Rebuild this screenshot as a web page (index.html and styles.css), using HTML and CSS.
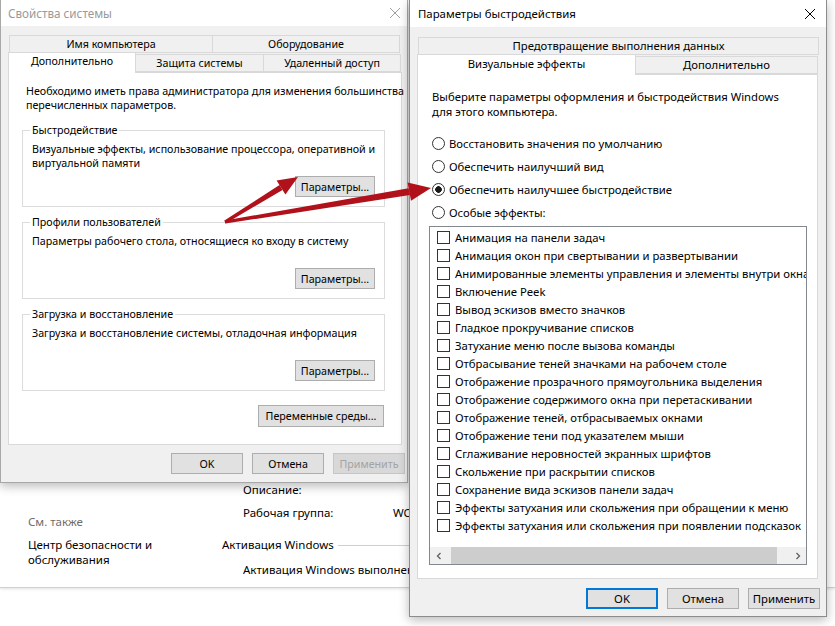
FILE: index.html
```html
<!DOCTYPE html>
<html lang="ru">
<head>
    <meta charset="UTF-8">
    <title>Параметры быстродействия</title>
    <link rel="stylesheet" href="styles.css">
</head>
<body>
<div class="desk">

    <!-- окно "Система" на заднем плане -->
    <div class="sysinfo">
        <div class="see-also">
            <div class="muted">См. также</div>
            <div class="link">Центр безопасности и<br>обслуживания</div>
        </div>
        <div class="info">
            <div class="row">Описание:</div>
            <div class="row row-wg"><span class="key">Рабочая группа:</span><span>WORKGROUP</span></div>
            <div class="section"><span>Активация Windows</span><span class="rule"></span></div>
            <div class="row row-act">Активация Windows выполнена</div>
        </div>
    </div>

    <!-- Свойства системы -->
    <div class="win win-sys">
        <div class="titlebar inactive">
            <span>Свойства системы</span>
            <svg class="close" width="12" height="12" viewBox="0 0 12 12"><path d="M1 1L11 11M11 1L1 11"/></svg>
        </div>
        <div class="win-body">
            <div class="tabrow tabrow-top">
                <span class="tab t-name">Имя компьютера</span>
                <span class="tab t-hw">Оборудование</span>
            </div>
            <div class="tabrow">
                <span class="tab selected t-adv">Дополнительно</span>
                <span class="tab t-prot">Защита системы</span>
                <span class="tab t-remote">Удаленный доступ</span>
            </div>
            <div class="panel panel-sys">
                <p class="intro">Необходимо иметь права администратора для изменения большинства<br>перечисленных параметров.</p>

                <fieldset>
                    <legend>Быстродействие</legend>
                    <p class="desc">Визуальные эффекты, использование процессора, оперативной и виртуальной памяти</p>
                    <div class="btn-line"><button class="btn btn-param">Параметры...</button></div>
                </fieldset>

                <fieldset>
                    <legend>Профили пользователей</legend>
                    <p class="desc">Параметры рабочего стола, относящиеся ко входу в систему</p>
                    <div class="btn-line"><button class="btn btn-param">Параметры...</button></div>
                </fieldset>

                <fieldset>
                    <legend>Загрузка и восстановление</legend>
                    <p class="desc">Загрузка и восстановление системы, отладочная информация</p>
                    <div class="btn-line"><button class="btn btn-param">Параметры...</button></div>
                </fieldset>

                <div class="btn-line env"><button class="btn btn-env">Переменные среды...</button></div>
            </div>
            <div class="buttons">
                <button class="btn">OK</button>
                <button class="btn">Отмена</button>
                <button class="btn disabled">Применить</button>
            </div>
        </div>
    </div>

    <!-- Параметры быстродействия -->
    <div class="win win-perf">
        <div class="titlebar">
            <span>Параметры быстродействия</span>
            <svg class="close" width="12" height="12" viewBox="0 0 12 12"><path d="M1 1L11 11M11 1L1 11"/></svg>
        </div>
        <div class="win-body">
            <div class="tabrow tabrow-top">
                <span class="tab t-dep">Предотвращение выполнения данных</span>
            </div>
            <div class="tabrow">
                <span class="tab selected t-vis">Визуальные эффекты</span>
                <span class="tab t-more">Дополнительно</span>
            </div>
            <div class="panel panel-perf">
                <p class="intro">Выберите параметры оформления и быстродействия Windows<br>для этого компьютера.</p>
                <div class="radios">
                    <div class="radio"><span class="dot"></span>Восстановить значения по умолчанию</div>
                    <div class="radio"><span class="dot"></span>Обеспечить наилучший вид</div>
                    <div class="radio"><span class="dot on"></span>Обеспечить наилучшее быстродействие</div>
                    <div class="radio"><span class="dot"></span>Особые эффекты:</div>
                </div>
                <div class="effects">
                    <div class="items">
                        <div class="check"><span class="box"></span>Анимация на панели задач</div>
                        <div class="check"><span class="box"></span>Анимация окон при свертывании и развертывании</div>
                        <div class="check"><span class="box"></span>Анимированные элементы управления и элементы внутри окна</div>
                        <div class="check"><span class="box"></span>Включение Peek</div>
                        <div class="check"><span class="box"></span>Вывод эскизов вместо значков</div>
                        <div class="check"><span class="box"></span>Гладкое прокручивание списков</div>
                        <div class="check"><span class="box"></span>Затухание меню после вызова команды</div>
                        <div class="check"><span class="box"></span>Отбрасывание теней значками на рабочем столе</div>
                        <div class="check"><span class="box"></span>Отображение прозрачного прямоугольника выделения</div>
                        <div class="check"><span class="box"></span>Отображение содержимого окна при перетаскивании</div>
                        <div class="check"><span class="box"></span>Отображение теней, отбрасываемых окнами</div>
                        <div class="check"><span class="box"></span>Отображение тени под указателем мыши</div>
                        <div class="check"><span class="box"></span>Сглаживание неровностей экранных шрифтов</div>
                        <div class="check"><span class="box"></span>Скольжение при раскрытии списков</div>
                        <div class="check"><span class="box"></span>Сохранение вида эскизов панели задач</div>
                        <div class="check"><span class="box"></span>Эффекты затухания или скольжения при обращении к меню</div>
                        <div class="check"><span class="box"></span>Эффекты затухания или скольжения при появлении подсказок</div>
                    </div>
                    <div class="hscroll">
                        <span class="arrow"><svg width="8" height="8" viewBox="0 0 8 8"><path d="M5.5 1L2.5 4L5.5 7"/></svg></span>
                        <span class="thumb"></span>
                        <span class="arrow"><svg width="8" height="8" viewBox="0 0 8 8"><path d="M2.5 1L5.5 4L2.5 7"/></svg></span>
                    </div>
                </div>
            </div>
            <div class="buttons">
                <button class="btn default">OK</button>
                <button class="btn">Отмена</button>
                <button class="btn">Применить</button>
            </div>
        </div>
    </div>

    <!-- красные стрелки поверх скриншота -->
    <svg class="arrows" width="835" height="626" viewBox="0 0 835 626">
        <polygon points="224.4,220.6 279.5,185 282.5,190 225.6,223.4"/>
        <polygon points="298,177 276.6,180.4 285.4,194.6"/>
        <polygon points="224.6,220.6 408.6,188.2 410,195 225.4,223.6"/>
        <polygon points="431,188 407.6,182.4 411,200.8"/>
    </svg>
</div>
</body>
</html>
```

FILE: styles.css
```css
* {
    box-sizing: border-box;
}
body {
    margin: 0;
    background: #fff;
    font-family: "Noto Sans", "Segoe UI", sans-serif;
    color: #000;
}
p {
    margin: 0;
}
.desk {
    position: relative;
    width: 835px;
    height: 626px;
    overflow: hidden;
}

/* окно на заднем плане */
.sysinfo {
    position: absolute;
    left: 0;
    top: 0;
    width: 835px;
    height: 588px;
    border-bottom: 1px solid #d0d0d0;
    box-shadow: 0 1px 3px rgba(0, 0, 0, 0.12);
    padding-top: 482px;
    display: grid;
    grid-template-columns: 222px 1fr;
    font-size: 11.5px;
    line-height: 16px;
    white-space: nowrap;
}
.see-also {
    padding: 32px 0 0 28px;
}
.muted {
    color: #6d6d6d;
}
.link {
    margin-top: 7px;
    line-height: 15px;
}
.row {
    padding-left: 21px;
}
.row-wg {
    margin-top: 7px;
}
.key {
    display: inline-block;
    width: 150px;
}
.section {
    margin-top: 16px;
    display: flex;
    align-items: center;
}
.rule {
    width: 200px;
    height: 1px;
    margin-left: 4px;
    background: #cfcfcf;
}
.row-act {
    margin-top: 9px;
}

/* окна */
.win {
    position: absolute;
    top: 0;
    background: #f0f0f0;
    border: 1px solid #a8a8a8;
    border-top: none;
    box-shadow: 0 3px 10px rgba(0, 0, 0, 0.28);
}
.win-sys {
    left: 0;
    width: 408px;
    height: 483px;
}
.win-perf {
    left: 409px;
    width: 418px;
    height: 617px;
    border-color: #8c8c8c;
}
.titlebar {
    height: 26px;
    background: #fff;
    display: flex;
    align-items: center;
    justify-content: space-between;
    padding: 0 6px 0 7px;
    font-size: 11.7px;
}
.win-perf .titlebar {
    height: 27px;
    padding: 0 10px 0 8px;
    font-size: 11.4px;
}
.close {
    stroke: #000;
    stroke-width: 1;
    fill: none;
}
.inactive {
    color: #999;
}
.inactive .close {
    stroke: #a0a0a0;
}
.win-body {
    padding: 9px 0 0 7px;
    font-size: 10.7px;
}
.win-perf .win-body {
    padding: 10px 0 0 7px;
    font-size: 11.3px;
}

/* вкладки */
.tabrow {
    display: flex;
    align-items: flex-end;
    height: 19px;
}
.tabrow-top {
    height: 18px;
    padding-left: 1px;
}
.tab {
    height: 18px;
    line-height: 16px;
    text-align: center;
    background: #f0f0f0;
    border: 1px solid #d9d9d9;
    margin-left: -1px;
    white-space: nowrap;
}
.tab:first-child {
    margin-left: 0;
}
.tab.selected {
    position: relative;
    z-index: 1;
    height: 21px;
    margin-bottom: -1px;
    background: #fff;
    border-bottom: none;
    line-height: 17px;
}
.t-name { width: 204px; }
.t-hw { width: 188px; }
.t-adv { width: 128px; }
.t-prot { width: 129px; }
.t-remote { width: 138px; }
.t-dep { width: 401px; }
.t-vis { width: 219px; }
.t-more { width: 183px; }

.panel {
    background: #fff;
    border: 1px solid #d9d9d9;
}
.panel-sys {
    width: 394px;
    height: 373px;
    padding: 11px 0 0 13px;
}
.panel-sys .intro {
    padding-left: 4px;
    line-height: 14px;
    white-space: nowrap;
}
fieldset {
    width: 363px;
    margin: 11px 0 0 0;
    padding: 0 9px 9px 9px;
    border: 1px solid #dcdcdc;
    min-width: 0;
}
fieldset + fieldset {
    margin-top: 8px;
}
legend {
    padding: 0 2px;
    margin-left: -2px;
    line-height: 14px;
}
.desc {
    margin: 5px -6px 0 0;
    height: 28px;
    line-height: 14px;
}
.btn-line {
    display: flex;
    justify-content: flex-end;
    margin-top: 6px;
}
.env {
    width: 362px;
    margin-top: 14px;
}

/* кнопки */
.btn {
    width: 72px;
    height: 21px;
    padding: 0;
    font-family: inherit;
    font-size: inherit;
    color: #000;
    background: #e1e1e1;
    border: 1px solid #adadad;
}
.btn-param {
    width: 80px;
}
.btn-env {
    width: 126px;
    height: 22px;
}
.btn.default {
    border-color: #0078d7;
    box-shadow: inset 0 0 0 1px #0078d7;
}
.btn.disabled {
    color: #a3a3a3;
    background: #d8d8d8;
    border-color: #c6c6c6;
}
.buttons {
    display: flex;
    justify-content: flex-end;
    gap: 9px;
    padding-right: 2px;
    margin-top: 8px;
}
.win-perf .buttons {
    padding-right: 6px;
    margin-top: 9px;
}

/* Параметры быстродействия */
.panel-perf {
    width: 401px;
    height: 505px;
    padding: 14px 0 0 11px;
}
.panel-perf .intro {
    padding-left: 3px;
    line-height: 15px;
    white-space: nowrap;
}
.radios {
    margin-top: 13px;
    padding-left: 3px;
}
.radio {
    display: flex;
    align-items: center;
    height: 23px;
    white-space: nowrap;
}
.dot {
    width: 13px;
    height: 13px;
    margin-right: 4px;
    border: 1px solid #333;
    border-radius: 50%;
    background: #fff;
}
.dot.on {
    background: radial-gradient(circle, #1a1a1a 0 3px, #fff 3.6px);
}
.effects {
    width: 378px;
    height: 339px;
    margin-top: 2px;
    border: 1px solid #828790;
    background: #fff;
    display: flex;
    flex-direction: column;
    overflow: hidden;
}
.items {
    flex: 1;
    padding-top: 1px;
    overflow: hidden;
}
.check {
    display: flex;
    align-items: center;
    height: 18px;
    padding-left: 7px;
    white-space: nowrap;
}
.box {
    flex: none;
    width: 13px;
    height: 13px;
    margin-right: 5px;
    border: 1px solid #333;
    background: #fff;
}
.hscroll {
    flex: none;
    height: 17px;
    display: flex;
    background: #f0f0f0;
}
.arrow {
    width: 17px;
    display: flex;
    align-items: center;
    justify-content: center;
}
.arrow path {
    stroke: #606060;
    stroke-width: 1.3;
    fill: none;
}
.thumb {
    flex: 1;
    margin: 0 12px 0 4px;
    background: #cdcdcd;
}

.arrows {
    position: absolute;
    left: 0;
    top: 0;
    z-index: 5;
    fill: #b0111a;
    pointer-events: none;
}
```
